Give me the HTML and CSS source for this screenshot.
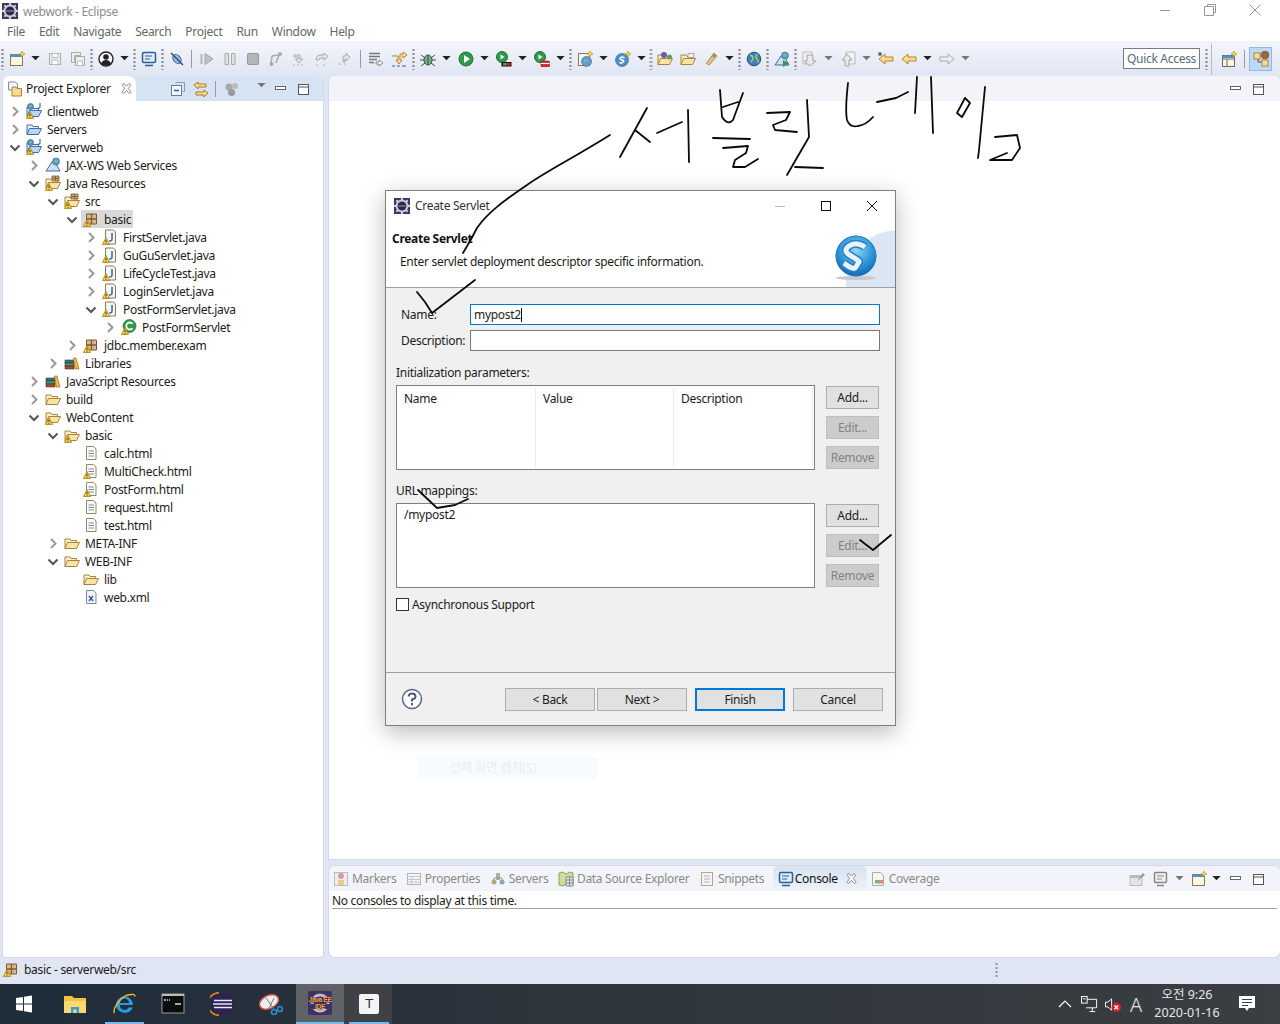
FILE: index.html
```html
<!DOCTYPE html>
<html lang="en">
<head>
    <meta charset="UTF-8">
    <title>webwork - Eclipse</title>
    <link rel="stylesheet" href="styles.css">
</head>
<body>
    <svg class="sprite" xmlns="http://www.w3.org/2000/svg">
        <symbol id="warn" viewBox="0 0 16 16"><path d="M4 8.500 L7.600 15.500 H.4Z" fill="#f7c93e" stroke="#a8801f" stroke-width=".8"/><path d="M4 10.800v2.400M4 14v.7" stroke="#4a3a10"/></symbol>
        <symbol id="chev-r" viewBox="0 0 16 16"><path d="M6 4l4.500 4.500L6 13" fill="none" stroke="#9a9a9a" stroke-width="2"/></symbol>
        <symbol id="chev-d" viewBox="0 0 16 16"><path d="M3.500 6.500L8 11l4.500-4.500" fill="none" stroke="#555" stroke-width="2"/></symbol>
        <symbol id="app" viewBox="0 0 16 16"><rect width="16" height="16" fill="#3d3268"/><circle cx="8" cy="8" r="5.500" fill="none" stroke="#cfcfcf" stroke-width="2"/><path d="M8 0v3M8 13v3M0 8h3M13 8h3M2.300 2.300l2 2M11.700 11.700l2 2M13.700 2.300l-2 2M4.300 11.700l-2 2" stroke="#cfcfcf" stroke-width="2"/><circle cx="8" cy="8" r="3.800" fill="#2a2450"/><path d="M4.500 8h7" stroke="#aaa"/></symbol>
        <symbol id="folder" viewBox="0 0 16 16"><path d="M1 13.500V4h5l1 1.500h5.500V7" fill="#fdf0c8" stroke="#a9843f"/><path d="M1 13.500L3.500 7.500h12l-3 6z" fill="#fbe3a6" stroke="#a9843f"/></symbol>
        <symbol id="folder-b" viewBox="0 0 16 16"><path d="M1 13.500V4h5l1 1.500h5.500V7" fill="#e4f0fb" stroke="#3f6ea6"/><path d="M1 13.500L3.500 7.500h12l-3 6z" fill="#b9d6f2" stroke="#3f6ea6"/></symbol>
        <symbol id="project" viewBox="0 0 16 16"><use href="#folder-b"/><circle cx="4.500" cy="3.500" r="3" fill="#4f93c9" stroke="#2d5f8a" stroke-width=".6"/><path d="M3 3h3" stroke="#8fc46a" stroke-width="1.500"/><path d="M14 0v4q0 1.500-2.500 1" fill="none" stroke="#3f6ea6" stroke-width="1.200"/></symbol>
        <symbol id="pkg" viewBox="0 0 16 16"><path d="M3.500 3h10v10h-10z" fill="#d9b98c" stroke="#7d5a32"/><path d="M3.500 8h10M8.500 3v10" stroke="#7d5a32" stroke-width="1.300"/></symbol>
        <symbol id="res" viewBox="0 0 16 16"><use href="#folder"/><path d="M7 1h7v5H7z" fill="#c9a474" stroke="#7d5a32" stroke-width=".8"/><path d="M7 3.500h7M10.500 1v5" stroke="#7d5a32" stroke-width=".8"/></symbol>
        <symbol id="java" viewBox="0 0 16 16"><path d="M3.500 1h8l2 2v12h-10z" fill="#f3f6fa" stroke="#8a7a52"/><path d="M10 4v6q0 2.500-3 2" fill="none" stroke="#3a64a8" stroke-width="1.500"/></symbol>
        <symbol id="cls" viewBox="0 0 16 16"><circle cx="8.500" cy="7" r="6.500" fill="#2f9a4a" stroke="#1f7036" stroke-width=".7"/><path d="M11.500 4.800a3.500 3.500 0 1 0 0 4.400" fill="none" stroke="#fff" stroke-width="1.800"/></symbol>
        <symbol id="lib" viewBox="0 0 16 16"><rect x="1" y="5" width="9" height="3" fill="#3c6f9c" stroke="#222" stroke-width=".5"/><rect x="1" y="8" width="9" height="3" fill="#4f9a58" stroke="#222" stroke-width=".5"/><rect x="1" y="11" width="9" height="3" fill="#a94c3a" stroke="#222" stroke-width=".5"/><path d="M11 14L9.500 3h2.500l3 11z" fill="#f2b73f" stroke="#9a7320" stroke-width=".7"/></symbol>
        <symbol id="jaxws" viewBox="0 0 16 16"><path d="M1 14L7 5h3l5 9z" fill="#cfe0f2" stroke="#3a6aa8"/><circle cx="11" cy="4.500" r="3.500" fill="#5c9fd0" stroke="#2d5f8a" stroke-width=".6"/><path d="M9.500 4h3" stroke="#8fc46a" stroke-width="1.500"/></symbol>
        <symbol id="html" viewBox="0 0 16 16"><path d="M3.500 1.500h7l2.500 2.500v10.500h-9.500z" fill="#fbfbf6" stroke="#8e8a70"/><path d="M5.500 6h5.500" stroke="#c0708a"/><path d="M5.500 8.500h5.500" stroke="#6a8ac0"/><path d="M5.500 11h5.500" stroke="#6aa890"/></symbol>
        <symbol id="xml" viewBox="0 0 16 16"><path d="M3.500 1.500h7l2.500 2.500v10.500h-9.500z" fill="#eef3fa" stroke="#7d8a9c"/><path d="M6 7l4 5M10 7l-4 5" stroke="#2f5590" stroke-width="1.300"/></symbol>
        <symbol id="close" viewBox="0 0 12 12"><path d="M2 1l2 0 2 2.500L8 1h2l.8.800L8 6l3 4.200-.8.800H8.500L6 8 3.500 11H1.800L1 10.200 4 6 1.200 1.800z" fill="#fff" stroke="#777" stroke-width=".9"/></symbol>
        <symbol id="min" viewBox="0 0 16 16"><rect x="2.500" y="5.500" width="10" height="3" fill="#fff" stroke="#666"/></symbol>
        <symbol id="max" viewBox="0 0 16 16"><rect x="2.500" y="3.500" width="10" height="10" fill="#fff" stroke="#555"/><path d="M2.500 6h10" stroke="#555"/></symbol>
        <symbol id="new" viewBox="0 0 16 16"><rect x="1.500" y="3.500" width="12" height="11" fill="#fdf6dc" stroke="#8a7a52"/><rect x="1.500" y="3.500" width="12" height="2.500" fill="#4f8fd0"/><path d="M13 0l1 2 2 1-2 1-1 2-1-2-2-1 2-1z" fill="#f7d24a" stroke="#a8801f" stroke-width=".5"/></symbol>
        <symbol id="save" viewBox="0 0 16 16"><path d="M2.500 2.500h11v11h-11z" fill="#eee" stroke="#aaa"/><path d="M5 2.500h6v4H5zM5 9h6v4.500H5z" fill="#fff" stroke="#bbb"/></symbol>
        <symbol id="saveall" viewBox="0 0 16 16"><path d="M1.500 1.500h9v3h-6v7h-3z" fill="#eee" stroke="#aaa"/><path d="M5.500 5.500h9v9h-9z" fill="#eee" stroke="#aaa"/><path d="M7.500 10h5v4.500h-5z" fill="#fff" stroke="#bbb"/></symbol>
        <symbol id="user" viewBox="0 0 16 16"><circle cx="8" cy="8" r="7" fill="#fff" stroke="#222" stroke-width="1.400"/><circle cx="8" cy="6" r="2.800" fill="#222"/><path d="M3 13q1-4 5-4t5 4q-5 3-10 0z" fill="#222"/></symbol>
        <symbol id="console" viewBox="0 0 16 16"><rect x="1.500" y="1.500" width="13" height="10" rx="1.500" fill="#dfeaf6" stroke="#2a5f9c" stroke-width="1.500"/><path d="M4 5h7M4 8h5" stroke="#2a5f9c"/><path d="M4 14.500h8" stroke="#2a5f9c" stroke-width="1.500"/></symbol>
        <symbol id="skip" viewBox="0 0 16 16"><ellipse cx="8" cy="8" rx="3.500" ry="5" transform="rotate(-40 8 8)" fill="#9dbbdc" stroke="#2a5f9c"/><path d="M2 2l12 12" stroke="#27476e" stroke-width="1.300"/></symbol>
        <symbol id="resume" viewBox="0 0 16 16"><path d="M2.500 3v10" stroke="#b5b5b5" stroke-width="2"/><path d="M6 2.500l8 5.500-8 5.500z" fill="#c2c2c2" stroke="#a5a5a5"/></symbol>
        <symbol id="pause" viewBox="0 0 16 16"><path d="M3 2.500h3.500v11H3zM9.500 2.500H13v11H9.500z" fill="#e2e2e2" stroke="#aaa"/></symbol>
        <symbol id="stop" viewBox="0 0 16 16"><rect x="2.500" y="2.500" width="11" height="11" rx="1" fill="#b5b5b5" stroke="#999"/></symbol>
        <symbol id="disc" viewBox="0 0 16 16"><path d="M3 13l1-8M4 5l7-1M11 4l-3 8" fill="none" stroke="#aaa" stroke-width="1.500"/><circle cx="12" cy="3" r="2" fill="#aaa"/><circle cx="3.500" cy="13" r="2" fill="#aaa"/></symbol>
        <symbol id="step" viewBox="0 0 16 16"><path d="M2 14h2M6 14h2M10 14h2" stroke="#b5b5b5"/><path d="M3 4h6v4h2.500L8 12 4.500 8H7V6H3z" fill="#e6e6e6" stroke="#aaa"/></symbol>
        <symbol id="stepo" viewBox="0 0 16 16"><path d="M2 14h2M9 14h2" stroke="#b5b5b5"/><path d="M2 9q0-5 5-5h3V2l4 3.500L10 9V7H7q-2 0-2 2z" fill="#e6e6e6" stroke="#aaa"/></symbol>
        <symbol id="stepr" viewBox="0 0 16 16"><path d="M1 13h3M7 13h2" stroke="#b5b5b5"/><path d="M6 11V5h3V2l4 4-4 4V8H8v3z" fill="#e6e6e6" stroke="#aaa"/></symbol>
        <symbol id="lines" viewBox="0 0 16 16"><path d="M1 2.500h11M1 5.500h11M1 8.500h8M1 11.500h5" stroke="#777" stroke-width="1.300"/><path d="M8 11h3V9l4 3-4 3v-2H8z" fill="#fff" stroke="#888"/></symbol>
        <symbol id="use-step" viewBox="0 0 16 16"><path d="M1 15h3M6 15h3M11 15h4" stroke="#3a64a8"/><path d="M1 5h6v4H5l3 4 3-4H9V3h3V1l4 3-4 3V5h-1" fill="#fbe3a6" stroke="#b5832a"/></symbol>
        <symbol id="debug" viewBox="0 0 16 16"><ellipse cx="8" cy="9" rx="4" ry="5" fill="#7dab8c" stroke="#2f5a44"/><path d="M8 4v10M1 4l4 3M15 4l-4 3M0 9h4M12 9h4M1 15l4-3M15 15l-4-3" stroke="#2f5a44"/></symbol>
        <symbol id="run" viewBox="0 0 16 16"><circle cx="8" cy="8" r="7" fill="#2f9a4a" stroke="#1f7036"/><path d="M6 4l6 4-6 4z" fill="#fff"/></symbol>
        <symbol id="cover" viewBox="0 0 16 16"><circle cx="6" cy="6" r="5.500" fill="#2f9a4a" stroke="#1f7036"/><path d="M4.500 3.500l4 2.500-4 2.500z" fill="#fff"/><rect x="5.500" y="11" width="10" height="4.500" fill="#111"/><rect x="7" y="12" width="3" height="2.500" fill="#2fb34a"/><rect x="10" y="12" width="4.500" height="2.500" fill="#d8202a"/></symbol>
        <symbol id="ext" viewBox="0 0 16 16"><circle cx="6" cy="6" r="5.500" fill="#2f9a4a" stroke="#1f7036"/><path d="M4.500 3.500l4 2.500-4 2.500z" fill="#fff"/><rect x="7" y="10" width="8.500" height="6" rx="1" fill="#d8303a" stroke="#8c1820" stroke-width=".6"/><path d="M7 12.500h8.500" stroke="#fff"/></symbol>
        <symbol id="newserver" viewBox="0 0 16 16"><rect x="1.500" y="2.500" width="11" height="12" fill="#f2f4f8" stroke="#8a7a52"/><circle cx="9.500" cy="10.500" r="5" fill="#5c9fd0" stroke="#2d5f8a" stroke-width=".6"/><path d="M7 9.500h4" stroke="#8fc46a" stroke-width="1.500"/><path d="M13 0l1 2 2 1-2 1-1 2-1-2-2-1 2-1z" fill="#f7d24a" stroke="#a8801f" stroke-width=".5"/></symbol>
        <symbol id="newservlet" viewBox="0 0 16 16"><circle cx="7" cy="9" r="6.500" fill="#4f8fc4" stroke="#2d5f8a" stroke-width=".6"/><path d="M9.500 6.800q-2.500-1.500-4 0t1.500 2.200 1 2.200-3.500 0" fill="none" stroke="#fff" stroke-width="1.500"/><path d="M13 0l1 2 2 1-2 1-1 2-1-2-2-1 2-1z" fill="#f7d24a" stroke="#a8801f" stroke-width=".5"/></symbol>
        <symbol id="openp" viewBox="0 0 16 16"><use href="#folder"/><circle cx="7" cy="4" r="3" fill="#6a5aa8"/><circle cx="12.500" cy="6" r="2.500" fill="#5f9a6a"/></symbol>
        <symbol id="openf" viewBox="0 0 16 16"><use href="#folder"/><rect x="8" y="2.500" width="6" height="4" fill="#f2f2f2" stroke="#888" stroke-width=".7"/></symbol>
        <symbol id="pen" viewBox="0 0 16 16"><path d="M3 13L11 2l3 3-8 9z" fill="#e8c58a" stroke="#a9843f"/><path d="M3 13l3 1-4 2z" fill="#fff3c8"/><path d="M10 6l2-2" stroke="#777" stroke-width="2"/></symbol>
        <symbol id="globe" viewBox="0 0 16 16"><circle cx="8" cy="8" r="6.800" fill="#3f80b8" stroke="#26507a"/><path d="M4 4q3 1 3 3T5 11M11 3q-2 3 0 5t1 4" fill="none" stroke="#a9c96a" stroke-width="1.600"/></symbol>
        <symbol id="webrun" viewBox="0 0 16 16"><use href="#jaxws"/><path d="M9 9l6 3.500-6 3.500z" fill="#2f9a4a"/></symbol>
        <symbol id="nextann" viewBox="0 0 16 16"><path d="M1 1h9v12H1z" fill="#f2f2f2" stroke="#bbb"/><path d="M5 4h6v6h3l-6 5-6-5h3z" fill="#e8e8e8" stroke="#a5a5a5"/></symbol>
        <symbol id="prevann" viewBox="0 0 16 16"><path d="M6 1h9v12H6z" fill="#f2f2f2" stroke="#bbb"/><path d="M5 15V9H2l5-6 5 6H9v6z" fill="#e8e8e8" stroke="#a5a5a5"/></symbol>
        <symbol id="back" viewBox="0 0 16 16"><path d="M1 8l6-5v3h8v4H7v3z" fill="#fbdc8c" stroke="#b5832a"/></symbol>
        <symbol id="lastedit" viewBox="0 0 16 16"><path d="M1 8l6-5v3h8v4H7v3z" fill="#fbdc8c" stroke="#b5832a"/><path d="M2 1v4M0 3h4M.500 1.500l3 3M3.500 1.500l-3 3" stroke="#3a5a8c"/></symbol>
        <symbol id="fwd" viewBox="0 0 16 16"><path d="M15 8L9 3v3H1v4h8v3z" fill="#eee" stroke="#aaa"/></symbol>
        <symbol id="collapse" viewBox="0 0 16 16"><path d="M5.500 1.500h9v9h-2" fill="none" stroke="#8a9cb0"/><rect x="1.500" y="4.500" width="10" height="10" fill="#f3f7fb" stroke="#6a7c90"/><path d="M4 9.500h5" stroke="#2a5f9c" stroke-width="1.500"/></symbol>
        <symbol id="link" viewBox="0 0 16 16"><path d="M1 4l4-3v2h8v3H5v2zM15 12l-4-3v2H3v3h8v2z" fill="#fbdc8c" stroke="#a9792a"/></symbol>
        <symbol id="filter" viewBox="0 0 16 16"><circle cx="5" cy="6" r="3.500" fill="#aaa"/><circle cx="11" cy="5" r="3" fill="#bbb"/><circle cx="7.500" cy="11.500" r="3.500" fill="#999"/></symbol>
        <symbol id="explorer" viewBox="0 0 16 16"><path d="M1.500 1h7l2 2v6h-9z" fill="#f6f8fb" stroke="#7d8a9c"/><path d="M5 9V6h4l1 1.500h4.500V15H5z" fill="#fbdc8c" stroke="#a9843f"/></symbol>
        <symbol id="dropd" viewBox="0 0 10 6"><path d="M0 0h10L5 5z" fill="#222"/></symbol>
        <symbol id="dropg" viewBox="0 0 10 6"><path d="M0 0h10L5 5z" fill="#777"/></symbol>
        <symbol id="persp" viewBox="0 0 16 16"><rect x="1.500" y="4.500" width="12" height="11" fill="#fdf6dc" stroke="#6a6a6a"/><path d="M1.500 8h12M6 8v7.500" stroke="#6a6a6a"/><rect x="1.500" y="4.500" width="12" height="2.500" fill="#4f8fd0"/><path d="M13 0l1 2 2 1-2 1-1 2-1-2-2-1 2-1z" fill="#f7d24a" stroke="#a8801f" stroke-width=".5"/></symbol>
        <symbol id="javaee" viewBox="0 0 16 16"><path d="M5 4v7h5" fill="none" stroke="#555"/><rect x="1" y="2" width="6" height="6" fill="#fbe08a" stroke="#a9843f"/><rect x="9" y="9" width="6" height="6" fill="#fbe08a" stroke="#a9843f"/><circle cx="12" cy="4" r="3.800" fill="#a8623a" stroke="#6a3a1e" stroke-width=".6"/></symbol>
        <symbol id="markers" viewBox="0 0 16 16"><rect x="1.500" y="1.500" width="13" height="13" fill="#eee" stroke="#bbb"/><circle cx="8" cy="5" r="3" fill="#d99"/><rect x="5" y="9" width="6" height="5" fill="#edc98c"/></symbol>
        <symbol id="props" viewBox="0 0 16 16"><rect x="1.500" y="2.500" width="13" height="11" fill="#f4f4f4" stroke="#b0b4ba"/><path d="M1.500 5.500h13M1.500 8.500h13M1.500 11h13M5.500 5.500v8" stroke="#c4c8ce"/></symbol>
        <symbol id="servers" viewBox="0 0 16 16"><circle cx="4" cy="11" r="2.500" fill="#b0a77a"/><circle cx="12" cy="11" r="2.500" fill="#8aa7c0"/><rect x="6" y="2" width="4" height="7" fill="#a5b59a"/><path d="M4 9V7h8v2" fill="none" stroke="#999"/></symbol>
        <symbol id="dse" viewBox="0 0 16 16"><path d="M1 2l4-1 3 2 4-2 3 1v12l-3 1-4-2-3 2-4-1z" fill="#c9dfa0" stroke="#8aa35e"/><path d="M8 6h7v9H8z" fill="#e8e8e8" stroke="#888"/><path d="M8 9h7M8 12h7M11.500 6v9" stroke="#888"/></symbol>
        <symbol id="snip" viewBox="0 0 16 16"><rect x="2.500" y="1.500" width="11" height="13" fill="#f6f6f0" stroke="#b0aa90"/><path d="M5 5h6" stroke="#d0a0a0"/><path d="M5 8h6" stroke="#a0b0d0"/><path d="M5 11h6" stroke="#a0c0b0"/></symbol>
        <symbol id="coverage" viewBox="0 0 16 16"><path d="M2.500 1.500h8l3 3v10h-11z" fill="#f5f5f0" stroke="#aaa"/><rect x="5" y="9" width="4" height="3.500" fill="#6fb77a"/><rect x="9" y="9" width="4" height="3.500" fill="#d88"/></symbol>
        <symbol id="pin" viewBox="0 0 16 16"><rect x="1" y="4.500" width="12" height="10" fill="#e4e4e4" stroke="#bbb"/><rect x="1" y="4.500" width="12" height="2.500" fill="#bbb"/><path d="M8 10l3-4 3-4 2 2-4 3z" fill="#999"/></symbol>
        <symbol id="consg" viewBox="0 0 16 16"><rect x="1.500" y="1.500" width="12" height="10" rx="1" fill="#eee" stroke="#888" stroke-width="1.500"/><path d="M4 5h7M4 8h5" stroke="#888"/><path d="M4 14.500h7" stroke="#888" stroke-width="1.500"/></symbol>
    </svg>

    <div class="app">
        <div class="titlebar">
            <svg class="ico"><use href="#app"/></svg>
            <span class="title-text">webwork - Eclipse</span>
            <div class="win-btns">
                <svg class="win-ico" viewBox="0 0 12 12"><path d="M1 6.500h10" stroke="#999"/></svg>
                <svg class="win-ico" viewBox="0 0 12 12"><path d="M3.500 2.500V.5h8v8h-2M.5 2.500h9v9h-9z" fill="#fff" stroke="#999"/></svg>
                <svg class="win-ico" viewBox="0 0 12 12"><path d="M.5.500l11 11M11.500.500l-11 11" stroke="#999"/></svg>
            </div>
        </div>

        <div class="menubar">
            <span>File</span><span>Edit</span><span>Navigate</span><span>Search</span><span>Project</span><span>Run</span><span>Window</span><span>Help</span>
        </div>

        <div class="toolbar">
            <i class="grip"></i>
            <span class="t"><svg class="ico"><use href="#new"/></svg></span><span class="d"><svg class="dr"><use href="#dropd"/></svg></span>
            <span class="t"><svg class="ico"><use href="#save"/></svg></span>
            <span class="t"><svg class="ico"><use href="#saveall"/></svg></span>
            <i class="grip"></i>
            <span class="t"><svg class="ico"><use href="#user"/></svg></span><span class="d"><svg class="dr"><use href="#dropd"/></svg></span>
            <i class="grip"></i>
            <span class="t"><svg class="ico"><use href="#console"/></svg></span>
            <i class="grip"></i>
            <span class="t"><svg class="ico"><use href="#skip"/></svg></span>
            <i class="sep"></i>
            <span class="t"><svg class="ico"><use href="#resume"/></svg></span>
            <span class="t"><svg class="ico"><use href="#pause"/></svg></span>
            <span class="t"><svg class="ico"><use href="#stop"/></svg></span>
            <span class="t"><svg class="ico"><use href="#disc"/></svg></span>
            <span class="t"><svg class="ico"><use href="#step"/></svg></span>
            <span class="t"><svg class="ico"><use href="#stepo"/></svg></span>
            <span class="t"><svg class="ico"><use href="#stepr"/></svg></span>
            <i class="sep wide-sep"></i>
            <span class="t"><svg class="ico"><use href="#lines"/></svg></span>
            <span class="t"><svg class="ico"><use href="#use-step"/></svg></span>
            <i class="grip wide-grip"></i>
            <span class="t"><svg class="ico"><use href="#debug"/></svg></span><span class="d"><svg class="dr"><use href="#dropd"/></svg></span>
            <span class="t"><svg class="ico"><use href="#run"/></svg></span><span class="d"><svg class="dr"><use href="#dropd"/></svg></span>
            <span class="t"><svg class="ico"><use href="#cover"/></svg></span><span class="d"><svg class="dr"><use href="#dropd"/></svg></span>
            <span class="t"><svg class="ico"><use href="#ext"/></svg></span><span class="d"><svg class="dr"><use href="#dropd"/></svg></span>
            <i class="grip"></i>
            <span class="t"><svg class="ico"><use href="#newserver"/></svg></span><span class="d"><svg class="dr"><use href="#dropd"/></svg></span>
            <span class="t"><svg class="ico"><use href="#newservlet"/></svg></span><span class="d"><svg class="dr"><use href="#dropd"/></svg></span>
            <i class="grip thin-grip"></i>
            <span class="t"><svg class="ico"><use href="#openp"/></svg></span>
            <span class="t"><svg class="ico"><use href="#openf"/></svg></span>
            <span class="t"><svg class="ico"><use href="#pen"/></svg></span><span class="d"><svg class="dr"><use href="#dropd"/></svg></span>
            <i class="grip"></i>
            <span class="t"><svg class="ico"><use href="#globe"/></svg></span>
            <i class="grip"></i>
            <span class="t"><svg class="ico"><use href="#webrun"/></svg></span>
            <i class="grip"></i>
            <span class="t"><svg class="ico"><use href="#nextann"/></svg></span><span class="d"><svg class="dr"><use href="#dropg"/></svg></span>
            <span class="t"><svg class="ico"><use href="#prevann"/></svg></span><span class="d"><svg class="dr"><use href="#dropg"/></svg></span>
            <span class="t"><svg class="ico"><use href="#lastedit"/></svg></span>
            <span class="t"><svg class="ico"><use href="#back"/></svg></span><span class="d"><svg class="dr"><use href="#dropd"/></svg></span>
            <span class="t"><svg class="ico"><use href="#fwd"/></svg></span><span class="d"><svg class="dr"><use href="#dropg"/></svg></span>
            <div class="tb-right">
                <div class="quick">Quick Access</div>
                <i class="grip"></i>
                <i class="sep-curve"></i>
                <span class="t"><svg class="ico"><use href="#persp"/></svg></span>
                <i class="sep"></i>
                <span class="t active"><svg class="ico"><use href="#javaee"/></svg></span>
            </div>
        </div>

        <div class="main">
            <div class="pane left-pane">
                <div class="pane-head">
                    <div class="tab on-white">
                        <svg class="ico"><use href="#explorer"/></svg>
                        <span>Project Explorer</span>
                        <svg class="x"><use href="#close"/></svg>
                    </div>
                    <div class="pane-tools explorer-tools">
                        <svg class="ico"><use href="#collapse"/></svg>
                        <svg class="ico"><use href="#link"/></svg>
                        <i class="sep short"></i>
                        <svg class="ico"><use href="#filter"/></svg>
                        <svg class="dr2"><use href="#dropg"/></svg>
                        <svg class="ico"><use href="#min"/></svg>
                        <svg class="ico"><use href="#max"/></svg>
                    </div>
                </div>
                <div class="tree">
                    <div class="row lv0"><svg class="chev"><use href="#chev-r"/></svg><svg class="ico"><use href="#project"/><use href="#warn"/></svg><span>clientweb</span></div>
                    <div class="row lv0"><svg class="chev"><use href="#chev-r"/></svg><svg class="ico"><use href="#folder-b"/></svg><span>Servers</span></div>
                    <div class="row lv0"><svg class="chev"><use href="#chev-d"/></svg><svg class="ico"><use href="#project"/><use href="#warn"/></svg><span>serverweb</span></div>
                    <div class="row lv1"><svg class="chev"><use href="#chev-r"/></svg><svg class="ico"><use href="#jaxws"/></svg><span>JAX-WS Web Services</span></div>
                    <div class="row lv1"><svg class="chev"><use href="#chev-d"/></svg><svg class="ico"><use href="#res"/><use href="#warn"/></svg><span>Java Resources</span></div>
                    <div class="row lv2"><svg class="chev"><use href="#chev-d"/></svg><svg class="ico"><use href="#res"/><use href="#warn"/></svg><span>src</span></div>
                    <div class="row lv3"><svg class="chev"><use href="#chev-d"/></svg><div class="sel"><svg class="ico"><use href="#pkg"/><use href="#warn"/></svg><span>basic</span></div></div>
                    <div class="row lv4"><svg class="chev"><use href="#chev-r"/></svg><svg class="ico"><use href="#java"/><use href="#warn"/></svg><span>FirstServlet.java</span></div>
                    <div class="row lv4"><svg class="chev"><use href="#chev-r"/></svg><svg class="ico"><use href="#java"/><use href="#warn"/></svg><span>GuGuServlet.java</span></div>
                    <div class="row lv4"><svg class="chev"><use href="#chev-r"/></svg><svg class="ico"><use href="#java"/><use href="#warn"/></svg><span>LifeCycleTest.java</span></div>
                    <div class="row lv4"><svg class="chev"><use href="#chev-r"/></svg><svg class="ico"><use href="#java"/><use href="#warn"/></svg><span>LoginServlet.java</span></div>
                    <div class="row lv4"><svg class="chev"><use href="#chev-d"/></svg><svg class="ico"><use href="#java"/><use href="#warn"/></svg><span>PostFormServlet.java</span></div>
                    <div class="row lv5"><svg class="chev"><use href="#chev-r"/></svg><svg class="ico"><use href="#cls"/><use href="#warn"/></svg><span>PostFormServlet</span></div>
                    <div class="row lv3"><svg class="chev"><use href="#chev-r"/></svg><svg class="ico"><use href="#pkg"/><use href="#warn"/></svg><span>jdbc.member.exam</span></div>
                    <div class="row lv2"><svg class="chev"><use href="#chev-r"/></svg><svg class="ico"><use href="#lib"/></svg><span>Libraries</span></div>
                    <div class="row lv1"><svg class="chev"><use href="#chev-r"/></svg><svg class="ico"><use href="#lib"/></svg><span>JavaScript Resources</span></div>
                    <div class="row lv1"><svg class="chev"><use href="#chev-r"/></svg><svg class="ico"><use href="#folder"/></svg><span>build</span></div>
                    <div class="row lv1"><svg class="chev"><use href="#chev-d"/></svg><svg class="ico"><use href="#folder"/><use href="#warn"/></svg><span>WebContent</span></div>
                    <div class="row lv2"><svg class="chev"><use href="#chev-d"/></svg><svg class="ico"><use href="#folder"/><use href="#warn"/></svg><span>basic</span></div>
                    <div class="row lv3"><i class="chev"></i><svg class="ico"><use href="#html"/></svg><span>calc.html</span></div>
                    <div class="row lv3"><i class="chev"></i><svg class="ico"><use href="#html"/><use href="#warn"/></svg><span>MultiCheck.html</span></div>
                    <div class="row lv3"><i class="chev"></i><svg class="ico"><use href="#html"/><use href="#warn"/></svg><span>PostForm.html</span></div>
                    <div class="row lv3"><i class="chev"></i><svg class="ico"><use href="#html"/></svg><span>request.html</span></div>
                    <div class="row lv3"><i class="chev"></i><svg class="ico"><use href="#html"/></svg><span>test.html</span></div>
                    <div class="row lv2"><svg class="chev"><use href="#chev-r"/></svg><svg class="ico"><use href="#folder"/></svg><span>META-INF</span></div>
                    <div class="row lv2"><svg class="chev"><use href="#chev-d"/></svg><svg class="ico"><use href="#folder"/></svg><span>WEB-INF</span></div>
                    <div class="row lv3"><i class="chev"></i><svg class="ico"><use href="#folder"/></svg><span>lib</span></div>
                    <div class="row lv3"><i class="chev"></i><svg class="ico"><use href="#xml"/></svg><span>web.xml</span></div>
                </div>
            </div>

            <div class="right-col">
                <div class="pane editor-pane">
                    <div class="pane-head light">
                        <div class="pane-tools">
                            <svg class="ico"><use href="#min"/></svg>
                            <svg class="ico"><use href="#max"/></svg>
                        </div>
                    </div>
                    <div class="ghost-menu">전체 화면 캡처(S)</div>
                </div>
                <div class="pane console-pane">
                    <div class="pane-head light">
                        <div class="tab dim"><svg class="ico"><use href="#markers"/></svg><span>Markers</span></div>
                        <div class="tab dim"><svg class="ico"><use href="#props"/></svg><span>Properties</span></div>
                        <div class="tab dim"><svg class="ico"><use href="#servers"/></svg><span>Servers</span></div>
                        <div class="tab dim"><svg class="ico"><use href="#dse"/></svg><span>Data Source Explorer</span></div>
                        <div class="tab dim"><svg class="ico"><use href="#snip"/></svg><span>Snippets</span></div>
                        <div class="tab current"><svg class="ico"><use href="#console"/></svg><span>Console</span><svg class="x"><use href="#close"/></svg></div>
                        <div class="tab dim"><svg class="ico"><use href="#coverage"/></svg><span>Coverage</span></div>
                        <div class="pane-tools console-tools">
                            <svg class="ico"><use href="#pin"/></svg>
                            <svg class="ico"><use href="#consg"/></svg>
                            <svg class="dr2"><use href="#dropg"/></svg>
                            <svg class="ico"><use href="#new"/></svg>
                            <svg class="dr2"><use href="#dropd"/></svg>
                            <svg class="ico"><use href="#min"/></svg>
                            <svg class="ico"><use href="#max"/></svg>
                        </div>
                    </div>
                    <div class="console-msg">No consoles to display at this time.</div>
                </div>
            </div>
        </div>

        <div class="statusbar">
            <svg class="ico"><use href="#pkg"/><use href="#warn"/></svg>
            <span>basic - serverweb/src</span>
            <i class="status-grip"></i>
        </div>

        <div class="taskbar">
            <div class="slot"><svg class="task-ico" viewBox="0 0 24 24"><path d="M4 6l7-1v6.500H4zM12 4.800L20 3.600v7.900h-8zM4 12.500h7V19l-7-1zM12 12.500h8v7.900l-8-1.200z" fill="#fff"/></svg></div>
            <div class="slot"><svg class="task-ico" viewBox="0 0 24 24"><path d="M1 4h8l2 2h12v15H1z" fill="#f5c242"/><path d="M1 9h22v12H1z" fill="#fbd96e"/><path d="M8 21v-6h8v6h-2.500v-3.500h-3V21z" fill="#3a9ae0"/></svg></div>
            <div class="slot under"><svg class="task-ico" viewBox="0 0 24 24"><path d="M4 13a8.500 8.500 0 0 1 17 0H8a4.500 4.500 0 0 0 8.500 2.500h4.300A8.800 8.800 0 0 1 4 13zM8 11h9a4.500 4.500 0 0 0-9 0z" fill="#2a9be0"/><path d="M2.500 21q-2-3 4-11T20 2.500q3-.5 3 2" fill="none" stroke="#f0b92e" stroke-width="1.400"/></svg></div>
            <div class="slot"><svg class="task-ico" viewBox="0 0 24 24"><rect x="1" y="2" width="22" height="19" fill="#0c0c0c" stroke="#9a9a9a"/><path d="M1 2h22v2H1z" fill="#bbb"/><path d="M3 8h2M6 8h1M8 8h1M14 12h6" stroke="#ddd" stroke-width="1.300"/></svg></div>
            <div class="slot"><svg class="task-ico" viewBox="0 0 24 24"><circle cx="12.500" cy="12" r="11" fill="#2c2255"/><path d="M4 8.500h18M3 12h19M4 15.500h18" stroke="#e8e8f4" stroke-width="1.300"/><path d="M9 .8a11 11 0 0 0 0 22.400" fill="none" stroke="#f08a18" stroke-width="1.500"/></svg></div>
            <div class="slot"><svg class="task-ico" viewBox="0 0 24 24"><ellipse cx="10" cy="10" rx="10" ry="6.500" transform="rotate(-25 10 10)" fill="#eeeeee" stroke="#d05050" stroke-width="1.500"/><path d="M7 6l8 11M15 6l-5 10" stroke="#777"/><circle cx="15" cy="20" r="2.500" fill="none" stroke="#2a8fd0" stroke-width="1.600"/><circle cx="21" cy="17" r="2.500" fill="none" stroke="#2a8fd0" stroke-width="1.600"/></svg></div>
            <div class="slot current-app">
                <svg class="task-ico" viewBox="0 0 24 24">
                    <rect width="24" height="24" rx="2" fill="#3d3268"/>
                    <circle cx="12" cy="12" r="8" fill="none" stroke="#bdbdbd" stroke-width="3"/>
                    <rect y="6.500" width="24" height="5" fill="#3d3268"/>
                    <rect y="13" width="24" height="5" fill="#3d3268"/>
                    <text x="12" y="11" class="jee">Java EE</text>
                    <text x="12" y="17.500" class="jee">IDE</text>
                </svg>
            </div>
            <div class="slot open-app"><span class="t-tile">T</span></div>
            <div class="tray">
                <svg class="tray-ico up" viewBox="0 0 14 14"><path d="M1 10l6-6 6 6" fill="none" stroke="#fff" stroke-width="1.200"/></svg>
                <svg class="tray-ico net" viewBox="0 0 18 18"><path d="M5.500 3.500h11v9h-11M9 16.500h6M12 12.500v4" fill="none" stroke="#fff"/><rect x=".5" y=".5" width="6" height="7" fill="#3a3e42" stroke="#fff"/><path d="M2 3h3" stroke="#fff"/></svg>
                <svg class="tray-ico spk" viewBox="0 0 18 18"><path d="M.5 6.500h2.500l4-3.500v12l-4-3.500H.5z" fill="none" stroke="#fff"/><circle cx="12" cy="12" r="5" fill="#d8202a"/><path d="M10 10l4 4M14 10l-4 4" stroke="#fff" stroke-width="1.300"/></svg>
                <span class="ime">A</span>
                <div class="clock"><span>오전 9:26</span><span>2020-01-16</span></div>
                <svg class="tray-ico notif" viewBox="0 0 18 18"><path d="M1 1h16v12h-6l-2 3-2-3H1z" fill="#fff"/><path d="M4 4.500h10M4 7.500h10M4 10.500h6" stroke="#3a3e42"/></svg>
            </div>
        </div>
    </div>

    <div class="dialog">
        <div class="dlg-title">
            <svg class="ico"><use href="#app"/></svg>
            <span>Create Servlet</span>
            <div class="dlg-btns">
                <svg class="win-ico" viewBox="0 0 12 12"><path d="M1 6.500h10" stroke="#bbb"/></svg>
                <svg class="win-ico" viewBox="0 0 12 12"><rect x="1.500" y="1.500" width="9" height="9" fill="none" stroke="#111"/></svg>
                <svg class="win-ico" viewBox="0 0 12 12"><path d="M1 1l10 10M11 1L1 11" stroke="#111"/></svg>
            </div>
        </div>
        <div class="dlg-head">
            <div class="dlg-head-text">
                <div class="dlg-h1">Create Servlet</div>
                <div class="dlg-sub">Enter servlet deployment descriptor specific information.</div>
            </div>
            <svg class="s-logo" viewBox="0 0 44 48">
                <defs>
                    <radialGradient id="ball" cx=".5" cy=".35" r=".7"><stop offset="0" stop-color="#8fd4f6"/><stop offset=".6" stop-color="#2b94d8"/><stop offset="1" stop-color="#0f5fa8"/></radialGradient>
                </defs>
                <ellipse cx="22" cy="44" rx="20" ry="2" fill="#c8c8c8"/>
                <circle cx="22" cy="22" r="20" fill="url(#ball)" stroke="#1a78bf"/>
                <path d="M31 13q-9-6-16-1t2 10 8 6-3 5-12-4" fill="none" stroke="#2a7fc2" stroke-width="8"/>
                <path d="M31 13q-9-6-16-1t2 10 8 6-3 5-12-4" fill="none" stroke="#e6f4fc" stroke-width="5"/>
            </svg>
        </div>
        <div class="dlg-body">
            <div class="field"><label>Name:</label><div class="input focus">mypost2<i class="caret"></i></div></div>
            <div class="field"><label>Description:</label><div class="input"></div></div>

            <div class="sec-label first">Initialization parameters:</div>
            <div class="sec">
                <div class="box params">
                    <div class="col">Name</div>
                    <div class="col">Value</div>
                    <div class="col">Description</div>
                </div>
                <div class="side-btns">
                    <div class="btn">Add...</div>
                    <div class="btn off">Edit...</div>
                    <div class="btn off">Remove</div>
                </div>
            </div>

            <div class="sec-label">URL mappings:</div>
            <div class="sec">
                <div class="box mappings">/mypost2</div>
                <div class="side-btns">
                    <div class="btn">Add...</div>
                    <div class="btn off">Edit...</div>
                    <div class="btn off">Remove</div>
                </div>
            </div>

            <div class="check-row"><i class="check"></i><span>Asynchronous Support</span></div>
        </div>
        <div class="dlg-foot">
            <svg class="help" viewBox="0 0 22 22"><circle cx="11" cy="11" r="9.500" fill="#fff" stroke="#5a6a8c" stroke-width="1.500"/><path d="M7.500 8.500q.5-3 3.500-3t3.500 2.500-3.500 3.500v2" fill="none" stroke="#4a5a7c" stroke-width="2"/><path d="M11 15v2.200" stroke="#4a5a7c" stroke-width="2"/></svg>
            <div class="foot-btns">
                <div class="btn wide">&lt; Back</div>
                <div class="btn wide next">Next &gt;</div>
                <div class="btn wide primary">Finish</div>
                <div class="btn wide">Cancel</div>
            </div>
        </div>
    </div>

    <svg class="ink" viewBox="0 0 1280 1024">
        <path d="M610 135C575 157 545 172 527 185C505 200 488 212 477 228C472 238 468 245 463 253"/>
        <path d="M647 108L620 157M635 130L650 142M657 133L682 122M688 110L689 162"/>
        <path d="M720 90L722 117Q728 126 733 120L743 93M723 107L738 102M713 138L750 139"/>
        <path d="M723 148L748 146L746 153L735 160L733 167L745 167L758 159"/>
        <path d="M767 113L790 112L786 120L773 125L775 130L797 132"/>
        <path d="M807 100L809 137L787 175M795 167L823 168"/>
        <path d="M848 83Q845 110 847 120Q850 128 858 126Q866 125 873 117M877 102L896 98L908 92"/>
        <path d="M917 77L915 113M931 77L933 133"/>
        <path d="M965 98L957 113L962 117L970 103L965 98M985 87L979 150L978 158"/>
        <path d="M995 137L1017 135L1020 148L1012 160L990 160L1007 153"/>
        <path d="M417 292L425 302L432 313L475 280"/>
        <path d="M418 490L437 508L455 505L468 499"/>
        <path d="M860 540L873 550L891 535"/>
    </svg>
</body>
</html>
```

FILE: styles.css
```css
* {
    box-sizing: border-box;
}
body {
    margin: 0;
    font-family: 'Noto Sans', 'Noto Sans CJK KR', sans-serif;
    font-size: 12px;
    letter-spacing: -0.3px;
    color: #1c1c1c;
    background: white;
    overflow: hidden;
}
.sprite {
    display: none;
}
.app {
    display: flex;
    flex-direction: column;
    width: 1280px;
    height: 1024px;
}
.ico {
    width: 16px;
    height: 16px;
    flex: none;
    display: block;
}

/* title bar + menu */
.titlebar {
    height: 22px;
    display: flex;
    align-items: center;
    padding-left: 2px;
    background: white;
    color: #8c8c8c;
}
.title-text {
    margin-left: 5px;
}
.win-btns {
    margin-left: auto;
    display: flex;
    gap: 33px;
    padding-right: 19px;
    margin-top: -2px;
}
.win-ico {
    width: 12px;
    height: 12px;
    display: block;
}
.menubar {
    height: 19px;
    display: flex;
    align-items: center;
    gap: 14px;
    padding-left: 7px;
    color: #666;
    background: white;
}

/* toolbar */
.toolbar {
    height: 34px;
    padding-top: 1px;
    display: flex;
    align-items: center;
    background: linear-gradient(to bottom, #f1f1f4 0, #f3f5fb 3px, #dfe5f3 100%);
}
.t {
    width: 23px;
    height: 24px;
    flex: none;
    display: flex;
    align-items: center;
    justify-content: center;
}
.d {
    width: 15px;
    flex: none;
    display: flex;
    justify-content: center;
}
.dr {
    width: 9px;
    height: 5px;
    display: block;
}
.dr2 {
    width: 9px;
    height: 5px;
    flex: none;
}
.grip {
    width: 5px;
    height: 22px;
    flex: none;
    background: radial-gradient(circle, #8f8f8f 0 1px, transparent 1.3px) center top / 5px 4px repeat-y;
}
.grip.wide-grip {
    width: 6px;
}
.grip.thin-grip {
    width: 4px;
}
.sep {
    width: 7px;
    height: 18px;
    flex: none;
    background: linear-gradient(#9a9a9a, #9a9a9a) center / 1px 100% no-repeat;
}
.sep.wide-sep {
    width: 8px;
}
.sep.short {
    height: 16px;
}
.sep-curve {
    width: 3px;
    height: 32px;
    margin-left: 2px;
    margin-right: 3px;
    border-left: 1px solid #b5b9c2;
    border-radius: 3px;
}
.tb-right {
    margin-left: auto;
    display: flex;
    align-items: center;
    padding-right: 8px;
}
.tb-right .sep {
    width: 9px;
}
.quick {
    width: 77px;
    height: 21px;
    margin-right: 4px;
    padding-left: 3px;
    line-height: 19px;
    border: 1px solid #7a7a7a;
    background: white;
    color: #5a6a7a;
    white-space: nowrap;
    overflow: hidden;
}
.t.active {
    background: #bcd9f5;
    border: 1px solid #8fbbe6;
}

/* panes */
.main {
    flex: 1;
    min-height: 0;
    display: flex;
    gap: 4px;
    padding: 1px 0 0 2px;
    background: #dfe5f3;
}
.pane {
    background: white;
    border: 1px solid #d3d9e6;
    border-top: 0;
    border-radius: 7px 7px 0 0;
    display: flex;
    flex-direction: column;
    position: relative;
}
.left-pane {
    width: 322px;
    flex: none;
    border-radius: 7px 7px 4px 4px;
}
.right-col {
    flex: 1;
    min-width: 0;
    display: flex;
    flex-direction: column;
    gap: 5px;
}
.editor-pane {
    flex: 1;
    border-right: 0;
}
.console-pane {
    height: 93px;
    flex: none;
    border-top: 1px solid #d3d9e6;
    border-right: 0;
    border-radius: 7px;
}
.pane-head {
    height: 25px;
    flex: none;
    display: flex;
    align-items: flex-end;
    background: #d6e3f2;
    border-radius: 6px 6px 0 0;
}
.pane-head.light {
    background: #f3f4fa;
}
.pane-tools {
    margin-left: auto;
    display: flex;
    align-items: center;
    height: 25px;
    gap: 7px;
    padding-right: 13px;
}
.explorer-tools {
    padding-right: 11px;
}
.explorer-tools .sep {
    margin: 0 -2px 0 -4px;
}
.explorer-tools .dr2 {
    margin: -6px 0.5px 0 9.5px;
}
.console-tools .ico:first-child {
    margin-right: 1px;
}
.console-tools .dr2 {
    margin-left: -1.5px;
}
.tab {
    height: 25px;
    display: flex;
    align-items: center;
    gap: 3px;
    white-space: nowrap;
}
.tab.on-white {
    width: 133px;
    background: white;
    border-radius: 6px 8px 0 0;
    padding-left: 4px;
}
.tab.dim {
    color: #8a8a8a;
    padding: 0 4px 0 3px;
}
.tab.dim:first-child {
    margin-left: 1px;
}
.tab.dim + .tab.dim {
    margin-left: 2.5px;
}
.tab.current {
    background: linear-gradient(#d6e3f2, #eef3f9);
    border-radius: 6px 6px 0 0;
    padding: 0 10px 0 5px;
    margin-left: 4.5px;
    gap: 1px;
    color: #111;
}
.x {
    width: 11px;
    height: 11px;
    margin-left: 7px;
    flex: none;
}

/* project tree */
.tree {
    padding-top: 1px;
}
.row {
    height: 18px;
    display: flex;
    align-items: center;
    white-space: nowrap;
}
.row > span,
.sel > span {
    margin-left: 5px;
}
.chev {
    width: 16px;
    height: 16px;
    flex: none;
    margin-right: 3px;
    display: block;
}
.sel {
    display: flex;
    align-items: center;
    height: 18px;
    margin-left: -2px;
    padding: 0 2px;
    background: #d9d9d9;
}
.lv0 { padding-left: 4px; }
.lv1 { padding-left: 23px; }
.lv2 { padding-left: 42px; }
.lv3 { padding-left: 61px; }
.lv4 { padding-left: 80px; }
.lv5 { padding-left: 99px; }

/* the faded context menu item left behind in the capture */
.ghost-menu {
    position: absolute;
    left: 89px;
    top: 681px;
    width: 179px;
    height: 22px;
    padding-left: 32px;
    line-height: 22px;
    letter-spacing: 0;
    background: #f7fbfe;
    color: #e9eef2;
}
.console-msg {
    margin: 0 3px;
    height: 18px;
    line-height: 20px;
    border-bottom: 1px solid #a0a0a0;
    white-space: nowrap;
}

/* status + taskbar */
.statusbar {
    height: 26px;
    flex: none;
    display: flex;
    align-items: center;
    gap: 5px;
    padding: 0 0 4px 3px;
    background: #dfe5f3;
}
.status-grip {
    width: 3px;
    height: 15px;
    margin-left: auto;
    margin-right: 282px;
    background: radial-gradient(circle, #9a9a9a 0 1px, transparent 1.3px) center top / 3px 4px repeat-y;
}
.taskbar {
    height: 40px;
    flex: none;
    display: flex;
    background: linear-gradient(to right, #1f2d3b, #2c343c 40%, #3b3e42);
}
.slot {
    width: 48px;
    height: 40px;
    flex: none;
    display: flex;
    align-items: center;
    justify-content: center;
    position: relative;
    margin-left: 1px;
}
.slot:first-child {
    margin-left: 0;
    width: 50px;
    padding-right: 2px;
}
.task-ico {
    width: 24px;
    height: 24px;
    display: block;
}
.slot.under::after {
    content: "";
    position: absolute;
    left: 5px;
    right: 4px;
    bottom: 0;
    height: 2px;
    background: #76b9ed;
}
.current-app {
    background: #5f6367;
    border-bottom: 2px solid #76b9ed;
}
.open-app {
    background: #3f4144;
    margin-left: 0;
    padding-left: 2px;
}
.open-app::after {
    content: "";
    position: absolute;
    left: 5px;
    right: 3px;
    bottom: 0;
    height: 2px;
    background: #76b9ed;
}
.t-tile {
    width: 20px;
    height: 20px;
    background: #f4f4f4;
    border-radius: 2px;
    color: #333;
    font-family: 'DejaVu Sans', sans-serif;
    font-size: 13px;
    line-height: 20px;
    text-align: center;
}
.jee {
    fill: #f39a2b;
    font-family: 'Liberation Sans', sans-serif;
    font-size: 6.5px;
    font-weight: bold;
    text-anchor: middle;
}
.tray {
    margin-left: auto;
    display: flex;
    align-items: center;
    color: #e6e6e6;
    padding-right: 24px;
}
.tray-ico {
    display: block;
    flex: none;
}
.up {
    width: 14px;
    height: 14px;
    margin-right: 9px;
}
.net {
    width: 17px;
    height: 17px;
    margin-right: 7px;
}
.spk {
    width: 17px;
    height: 17px;
    margin-right: 5px;
}
.ime {
    font-size: 20px;
    width: 18px;
    text-align: center;
    font-weight: 300;
}
.clock {
    width: 76px;
    margin-left: 4px;
    margin-right: 13px;
    display: flex;
    flex-direction: column;
    align-items: center;
    font-size: 12.5px;
    letter-spacing: 0;
    line-height: 18px;
}
.notif {
    width: 18px;
    height: 18px;
}

/* dialog */
.dialog {
    position: absolute;
    left: 385px;
    top: 190px;
    width: 511px;
    height: 536px;
    display: flex;
    flex-direction: column;
    background: #f0f0f0;
    border: 1px solid #7f7f7f;
    box-shadow: 0 6px 22px rgba(0,0,0,0.28);
}
.dlg-title {
    height: 29px;
    flex: none;
    display: flex;
    align-items: center;
    padding-left: 8px;
    background: white;
    color: #333;
    gap: 5px;
}
.dlg-btns {
    margin-left: auto;
    display: flex;
    gap: 34px;
    padding-right: 17px;
}
.dlg-head {
    height: 68px;
    flex: none;
    display: flex;
    justify-content: space-between;
    background: radial-gradient(ellipse 70px 80px at 100% 100%, #dbe6f5 0 70%, transparent 71%), white;
    border-bottom: 1px solid #a0a0a0;
}
.dlg-head-text {
    padding: 10px 0 0 6px;
}
.dlg-h1 {
    font-weight: bold;
    color: #111;
    line-height: 18px;
}
.dlg-sub {
    margin: 5px 0 0 8px;
    line-height: 17px;
}
.s-logo {
    width: 44px;
    height: 48px;
    margin: 14px 17px 0 0;
}
.dlg-body {
    flex: 1;
    padding: 16px 15px 0 10px;
}
.field {
    height: 21px;
    display: flex;
    align-items: center;
    margin-bottom: 5px;
}
.field label {
    width: 74px;
    padding-left: 5px;
    flex: none;
}
.input {
    flex: 1;
    height: 21px;
    padding-left: 3px;
    line-height: 19px;
    background: white;
    border: 1px solid #7a7a7a;
}
.input.focus {
    border-color: #0078d7;
}
.caret {
    display: inline-block;
    width: 1px;
    height: 14px;
    background: #111;
    vertical-align: -3px;
}
.sec-label {
    height: 17px;
    line-height: 17px;
    margin: 12px 0 4px;
}
.sec-label.first {
    margin-top: 13px;
}
.sec {
    display: flex;
    height: 85px;
    gap: 11px;
}
.box {
    width: 419px;
    flex: none;
    background: white;
    border: 1px solid #7f7f7f;
}
.params {
    display: grid;
    grid-template-columns: 139px 138px 139px;
    padding: 1px 1px 1px 0;
}
.col {
    padding: 3px 0 0 7px;
    line-height: 17px;
    border-right: 1px solid #e8eef7;
}
.mappings {
    padding: 2px 7px;
    line-height: 18px;
}
.side-btns {
    width: 53px;
    padding-top: 1px;
    display: flex;
    flex-direction: column;
    gap: 7px;
}
.btn {
    height: 23px;
    line-height: 21px;
    text-align: center;
    background: #e1e1e1;
    border: 1px solid #adadad;
    white-space: nowrap;
}
.btn.off {
    background: #cccccc;
    border-color: #bfbfbf;
    color: #838383;
}
.check-row {
    display: flex;
    align-items: center;
    margin-top: 9px;
    height: 14px;
    gap: 3px;
}
.check {
    width: 13px;
    height: 13px;
    background: white;
    border: 1px solid #333;
}
.dlg-foot {
    height: 53px;
    flex: none;
    display: flex;
    align-items: flex-start;
    padding: 15px 12px 0 15px;
    border-top: 1px solid #a0a0a0;
}
.help {
    width: 22px;
    height: 22px;
    flex: none;
}
.foot-btns {
    margin-left: auto;
    display: flex;
}
.btn.wide {
    width: 90px;
}
.btn.next {
    margin: 0 8px 0 2px;
}
.btn.primary {
    margin-right: 8px;
    border: 2px solid #0078d7;
    line-height: 19px;
}

/* pen strokes drawn across the whole capture */
.ink {
    position: absolute;
    left: 0;
    top: 0;
    width: 1280px;
    height: 1024px;
    fill: none;
    stroke: #0a0a0a;
    stroke-width: 1.8;
    stroke-linecap: round;
    stroke-linejoin: round;
    pointer-events: none;
}
```
